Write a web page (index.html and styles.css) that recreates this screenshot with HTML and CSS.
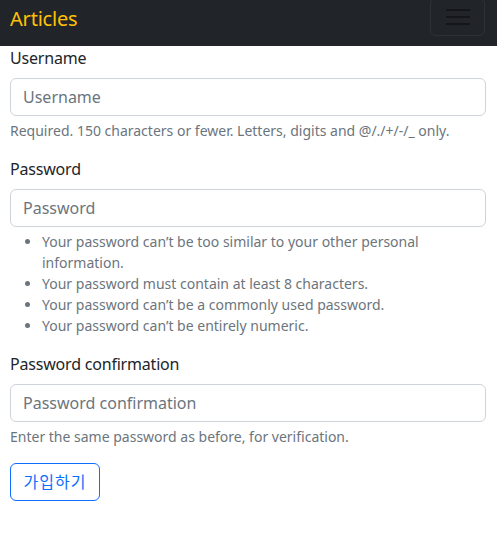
FILE: index.html
```html
<!DOCTYPE html>
<html lang="ko">
<head>
<meta charset="utf-8">
<title>Articles</title>
<link rel="stylesheet" href="styles.css">
</head>
<body>
<nav class="navbar">
  <a class="brand" href="#">Articles</a>
  <button class="toggler" type="button" aria-label="Toggle navigation">
    <svg width="26" height="20" viewBox="0 0 26 20"><path d="M1 3h24M1 10h24M1 17h24" stroke="#141619" stroke-width="2.2" stroke-linecap="butt"/></svg>
  </button>
</nav>
<main class="container">
  <form class="signup">
    <div class="field">
      <label class="label" for="u">Username</label>
      <input class="input" id="u" type="text" placeholder="Username">
      <div class="help">Required. 150 characters or fewer. Letters, digits and @/./+/-/_ only.</div>
    </div>
    <div class="field">
      <label class="label" for="p1">Password</label>
      <input class="input" id="p1" type="password" placeholder="Password">
      <ul class="help rules">
        <li>Your password can’t be too similar to your other personal information.</li>
        <li>Your password must contain at least 8 characters.</li>
        <li>Your password can’t be a commonly used password.</li>
        <li>Your password can’t be entirely numeric.</li>
      </ul>
    </div>
    <div class="field">
      <label class="label" for="p2">Password confirmation</label>
      <input class="input" id="p2" type="password" placeholder="Password confirmation">
      <div class="help">Enter the same password as before, for verification.</div>
    </div>
    <button class="btn" type="submit">가입하기</button>
  </form>
</main>
</body>
</html>
```
FILE: styles.css
```css
* { box-sizing: border-box; }
html, body { margin: 0; padding: 0; }
body {
  font-family: "Noto Sans", "Noto Sans CJK KR", sans-serif;
  font-size: 16px;
  line-height: 1.5;
  color: #212529;
  background: #fff;
}
.navbar {
  height: 46px;
  background: #212529;
  display: flex;
  justify-content: space-between;
  align-items: flex-start;
  padding: 0 12px 0 10px;
}
.brand {
  color: #ffc107;
  text-decoration: none;
  font-size: 20px;
  font-weight: 400;
  line-height: 30px;
  padding-top: 4px;
  letter-spacing: -0.2px;
}
.toggler {
  margin-top: -2px;
  width: 55px;
  height: 38px;
  background: transparent;
  border: 1px solid rgba(255,255,255,0.06);
  border-radius: 6px;
  padding: 0;
  display: flex;
  align-items: center;
  justify-content: center;
}
.container { padding: 0 11px 0 10px; }
.field { margin-bottom: 16px; }
.label { display: block; margin-bottom: 8px; letter-spacing: -0.2px; }
.input {
  display: block;
  width: 100%;
  height: 38px;
  padding: 6px 12px;
  font: inherit;
  color: #212529;
  border: 1px solid #ced4da;
  border-radius: 6px;
  background: #fff;
}
.input::placeholder { color: #6c757d; }
.help {
  margin-top: 4px;
  font-size: 14px;
  line-height: 21px;
  color: #6c757d;
}
.rules {
  margin: 4px 0 0;
  padding-left: 32px;
}
.btn {
  width: 90px;
  font: inherit;
  letter-spacing: 1px;
  color: #0d6efd;
  background: #fff;
  border: 1px solid #0d6efd;
  border-radius: 6px;
  padding: 6px 0;
  line-height: 24px;
  text-align: center;
}
```
